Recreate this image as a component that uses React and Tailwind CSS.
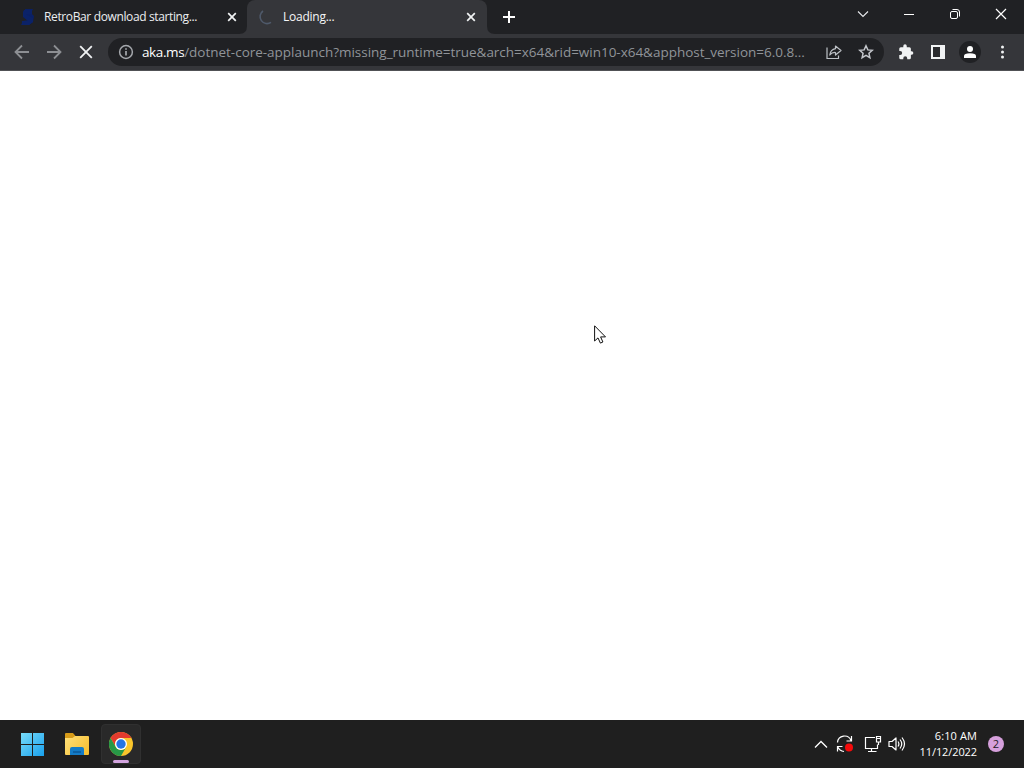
import { useState } from 'react';

const TabClose = () => (
  <svg width="10" height="10" viewBox="0 0 10 10" fill="none" stroke="#f1f3f4" strokeWidth="1.7">
    <path d="M1.200 1.200l7.600 7.600M8.800 1.200L1.200 8.800" />
  </svg>
);

const WindowControls = () => (
  <div className="ml-auto flex h-[28px] items-center">
    <button className="flex w-[46px] justify-center">
      <svg width="12" height="8" viewBox="0 0 12 8" fill="none" stroke="#e8eaed" strokeWidth="1.1">
        <path d="M1 1.5l5 5 5-5" />
      </svg>
    </button>
    <button className="flex w-[46px] justify-center">
      <svg width="10" height="2" viewBox="0 0 10 2">
        <rect y="1" width="10" height="1" fill="#fff" />
      </svg>
    </button>
    <button className="flex w-[46px] justify-center">
      <svg width="10" height="10" viewBox="0 0 10 10" fill="none" stroke="#fff">
        <rect x="0.5" y="2.5" width="7" height="7" rx="1.5" />
        <path d="M2.500.5H7Q9.500.5 9.500 3v4.500" />
      </svg>
    </button>
    <button className="flex w-[46px] justify-center">
      <svg width="12" height="12" viewBox="0 0 12 12" fill="none" stroke="#fff" strokeWidth="1.2">
        <path d="M1 1l10 10M11 1L1 11" />
      </svg>
    </button>
  </div>
);

const TabStrip = ({ active, setActive }) => (
  <div className="flex h-[34px] items-start bg-[#202124]">
    <div
      onClick={() => setActive(0)}
      className="flex h-[34px] w-[247px] items-center pl-5 text-xs text-[#eceef0]"
    >
      <svg width="16" height="18" viewBox="0 0 16 18">
        <path d="M5 1h8l-2 4 3 3-1 6-4 3H1l2-4 5-1-4-4z" fill="#0b2065" />
        <path d="M4 2h8v4H6l7 4v4l-4 3H2v-4h6L3 9V4z" fill="#0b2268" />
      </svg>
      <span className="ml-2 w-[183px] whitespace-nowrap tracking-[-0.37px]">RetroBar download starting...</span>
      <TabClose />
    </div>
    <div
      onClick={() => setActive(1)}
      className="relative flex h-[34px] w-[240px] items-center rounded-t-lg bg-[#35363a] pl-[11px] text-xs text-[#f5f6f7]"
    >
      <svg className="absolute bottom-0 -left-2" width="8" height="8" viewBox="0 0 8 8">
        <path d="M8 0v8H0Q8 8 8 0" fill="#35363a" />
      </svg>
      <svg className="absolute -right-2 bottom-0" width="8" height="8" viewBox="0 0 8 8">
        <path d="M0 0v8h8Q0 8 0 0" fill="#35363a" />
      </svg>
      <svg width="16" height="16" viewBox="0 0 16 16" fill="none" stroke="#4f5a6b" strokeWidth="1.6">
        <path d="M5 2A6.700 6.700 0 0 0 13 13.300" />
      </svg>
      <span className="ml-[9px] w-[183px] tracking-[-0.25px]">Loading...</span>
      <TabClose />
    </div>
    <button className="ml-4 flex h-[34px] items-center">
      <svg width="12" height="12" viewBox="0 0 12 12" stroke="#fff" strokeWidth="2">
        <path d="M6 0v12M0 6h12" />
      </svg>
    </button>
    <WindowControls />
  </div>
);

const Toolbar = () => (
  <div className="flex h-[37px] items-center border-b border-[#505155] bg-[#35363a] pl-[14px]">
    <div className="flex gap-4">
      <svg width="16" height="16" viewBox="0 0 16 16" fill="none" stroke="#8d8f93" strokeWidth="1.8">
        <path d="M15 8H2M8 1.500L1.500 8 8 14.500" />
      </svg>
      <svg width="16" height="16" viewBox="0 0 16 16" fill="none" stroke="#8d8f93" strokeWidth="1.8">
        <path d="M1 8h13M8 1.500L14.500 8 8 14.500" />
      </svg>
      <svg width="16" height="16" viewBox="0 0 16 16" fill="none" stroke="#f1f3f4" strokeWidth="1.8">
        <path d="M2.200 2.200l11.600 11.600M13.800 2.200L2.200 13.800" />
      </svg>
    </div>
    <div className="ml-[14px] flex h-7 w-[776px] items-center rounded-full bg-[#202124] pl-[10px]">
      <svg width="16" height="16" viewBox="0 0 16 16" fill="none" stroke="#a5a8ad" strokeWidth="1.5">
        <circle cx="8" cy="8" r="6.400" />
        <path d="M8 7v4.500M8 4.300v1.500" strokeWidth="1.700" />
      </svg>
      <div className="ml-2 w-[684px] pt-px text-[13.5px] whitespace-nowrap text-[#909499]">
        <span className="font-medium tracking-[-0.4px] text-white">aka.ms</span>
        <span className="tracking-[-0.02px]">
          /dotnet-core-applaunch?missing_runtime=true&amp;arch=x64&amp;rid=win10-x64&amp;apphost_version=6.0.8...
        </span>
      </div>
      <svg width="16" height="16" viewBox="0 0 16 16" fill="none" stroke="#bdc1c6" strokeWidth="1.200">
        <path d="M1 3.500V14.500H12.500V11.500" />
        <path d="M9.500 2l5.500 4.500-5.500 4.500V8.500Q6 8.200 3.800 11 4.500 5.500 9.500 4.700z" strokeLinejoin="round" />
      </svg>
      <svg className="ml-4" width="16" height="16" viewBox="0 0 16 16" fill="none" stroke="#c4c7cc" strokeWidth="1.500">
        <path d="M8 1.800l1.850 4.100 4.450.45-3.350 2.950.95 4.400L8 11.450 4.100 13.700l.95-4.400L1.700 6.350l4.450-.45z" />
      </svg>
    </div>
    <div className="ml-[13px] flex items-center">
      <svg width="18" height="18" viewBox="0 0 24 24" fill="#f1f3f4">
        <path d="M19.500 11H18.500V7.500a2 2 0 0 0-2-2h-3.500V4a2.300 2.300 0 0 0-4.600 0V5.500H5a2 2 0 0 0-2 2v3.300h1.300a2.600 2.600 0 0 1 0 5.200H3v3.500a2 2 0 0 0 2 2h3.400v-1.300a2.600 2.600 0 0 1 5.200 0v1.300h2.900a2 2 0 0 0 2-2v-3.900h1a2.300 2.300 0 0 0 0-4.600z" />
      </svg>
      <svg className="ml-4" width="14" height="14" viewBox="0 0 14 14">
        <rect width="14" height="14" fill="#f1f3f4" />
        <rect x="2" y="2" width="7" height="10" fill="#292a2d" />
      </svg>
      <div className="ml-[14px] flex size-[22px] items-center justify-center rounded-full bg-[#202124]">
        <svg width="12" height="12" viewBox="0 0 12 12" fill="#fff">
          <circle cx="6" cy="3" r="3" />
          <path d="M0 12V10Q0 7.300 6 7.300T12 10v2z" />
        </svg>
      </div>
      <svg className="ml-[19px]" width="4" height="14" viewBox="0 0 4 14" fill="#f1f3f4">
        <circle cx="2.500" cy="2" r="1.500" />
        <circle cx="2.500" cy="7" r="1.500" />
        <circle cx="2.500" cy="12" r="1.500" />
      </svg>
    </div>
  </div>
);

const ChromeLogo = () => (
  <svg width="24" height="24" viewBox="0 0 24 24">
    <circle cx="12" cy="12" r="12" fill="#f9c52b" />
    <path d="M1.600 6A12 12 0 0 1 22.400 6H12A6 6 0 0 0 6.800 15z" fill="#e33b2e" />
    <path d="M1.600 6L6.800 15A6 6 0 0 0 17.200 15L12 24A12 12 0 0 1 1.600 6" fill="#279847" />
    <circle cx="12" cy="12" r="6" fill="#fff" />
    <circle cx="12" cy="12" r="4.700" fill="#2474e5" />
  </svg>
);

const SystemTray = () => (
  <div className="ml-auto flex items-center">
    <svg width="14" height="9" viewBox="0 0 14 9" fill="none" stroke="#fff" strokeWidth="1.300">
      <path d="M1 7.500l6-6 6 6" />
    </svg>
    <svg className="ml-2" width="18" height="18" viewBox="0 0 18 18" fill="none" stroke="#fff" strokeWidth="1.200">
      <path d="M1.500 7.500A7 7 0 0 1 15 5.500M15.500 1V6H10.500M1.500 16.500v-5h5M1.500 11.500Q3.500 16 8 16.500" />
      <circle cx="13" cy="12.500" r="4" fill="#f50b0b" stroke="none" />
    </svg>
    <svg className="ml-[10px]" width="18" height="18" viewBox="0 0 18 18" fill="none" stroke="#fff" strokeWidth="1.200">
      <path d="M11 2.500H1.500v11h12V9.500M7.500 13.500v3M4 16.500h8.500" />
      <path d="M12.500 1.500h4v5.500h-4zM14.500 7v3M12.500 3.500h4" />
    </svg>
    <svg className="ml-[6px]" width="18" height="16" viewBox="0 0 18 16" fill="none" stroke="#fff" strokeWidth="1.200">
      <path d="M1 5.500h3L8 2v12l-4-3.500H1z" strokeLinejoin="round" />
      <path d="M10 5.500q1.800 2.500 0 5M12 3.500q3.500 4.500 0 9M14 1.500q5 6.500 0 13" />
    </svg>
    <div className="ml-[11px] w-[60px] text-right text-[11px] leading-4 whitespace-nowrap text-white">
      <div className="tracking-[0.1px]">6:10 AM</div>
      <div className="tracking-[-0.1px]">11/12/2022</div>
    </div>
    <div className="mr-5 ml-[11px] flex size-4 items-center justify-center rounded-full bg-[#d6a0dc] text-[11px] text-[#231b25]">
      2
    </div>
  </div>
);

const Taskbar = () => (
  <div className="flex h-12 items-center bg-[#1f1f1f] pl-[21px]">
    <svg width="23" height="23" viewBox="0 0 23 23">
      <defs>
        <linearGradient id="win" x1="0" y1="0" x2="23" y2="23" gradientUnits="userSpaceOnUse">
          <stop stopColor="#78dcfa" />
          <stop offset="1" stopColor="#18a0ed" />
        </linearGradient>
      </defs>
      <path d="M0 0h11v11H0zM12 0h11v11H12zM0 12h11v11H0zM12 12h11v11H12z" fill="url(#win)" />
    </svg>
    <svg className="ml-[21px]" width="24" height="22" viewBox="0 0 24 22">
      <defs>
        <linearGradient id="folder" x1="0" y1="3" x2="24" y2="22" gradientUnits="userSpaceOnUse">
          <stop stopColor="#ffe07a" />
          <stop offset="1" stopColor="#f6bd2c" />
        </linearGradient>
      </defs>
      <path d="M0 1q0-1 1-1h7l2.500 3L8 6H0z" fill="#d79b18" />
      <path d="M0 5h7.500L10 3h13q1 0 1 1v17q0 1-1 1H1q-1 0-1-1z" fill="url(#folder)" />
      <path d="M5 22v-6q0-2 2-2h10q2 0 2 2v6z" fill="#147cc7" />
      <path d="M8 18h8v2H8z" fill="#0c61a5" />
    </svg>
    <div className="ml-3 flex h-10 w-10 flex-col items-center rounded border border-[#303030] bg-[#292929] pt-[7px]">
      <ChromeLogo />
      <div className="mt-1 h-[3px] w-4 shrink-0 rounded-full bg-[#d3a4df]" />
    </div>
    <SystemTray />
  </div>
);

const App = () => {
  const [active, setActive] = useState(1);

  return (
    <div className="flex h-screen w-full flex-col overflow-hidden bg-white font-['Open_Sans','Noto_Sans',sans-serif]">
      <TabStrip active={active} setActive={setActive} />
      <Toolbar />
      <div className="relative flex-1 bg-white">
        <svg className="absolute top-[254px] left-[594px]" width="13" height="20" viewBox="0 0 13 20">
          <path d="M.6.800v15.200l3.400-3.100 2.400 5.200 2.500-1.100-2.300-5.100h4.900z" fill="#fff" stroke="#111" />
        </svg>
      </div>
      <Taskbar />
    </div>
  );
};

export default App;
